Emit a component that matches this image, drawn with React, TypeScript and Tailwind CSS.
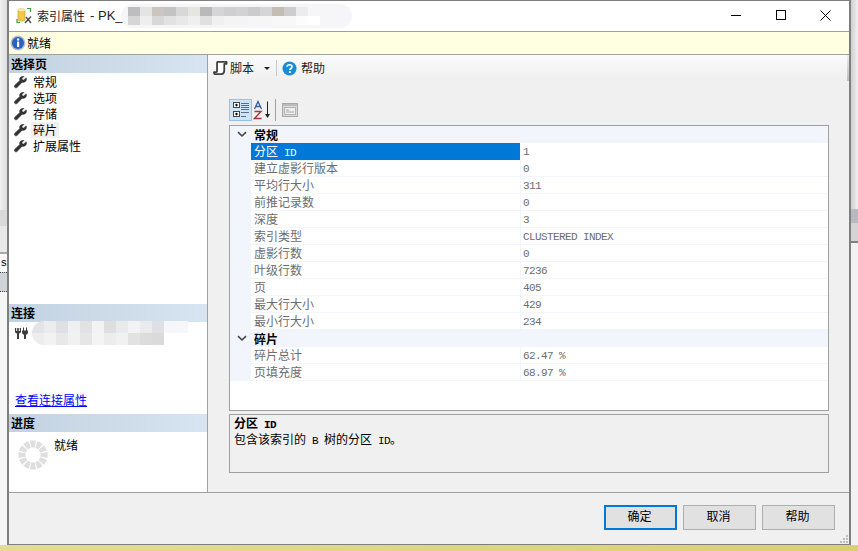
import React from 'react';

const cjk = "'Noto Sans CJK SC', 'Liberation Sans', sans-serif";

const pages = ['常规', '选项', '存储', '碎片', '扩展属性'];

const generalRows = [
  ['建立虚影行版本', '0'],
  ['平均行大小', '311'],
  ['前推记录数', '0'],
  ['深度', '3'],
  ['索引类型', 'CLUSTERED INDEX'],
  ['虚影行数', '0'],
  ['叶级行数', '7236'],
  ['页', '405'],
  ['最大行大小', '429'],
  ['最小行大小', '234'],
];

const fragmentRows = [
  ['碎片总计', '62.47 %'],
  ['页填充度', '68.97 %'],
];

const titleBlur = [
  ['#bdbdbd', '#e4e4e4', '#c9c6bf', '#c3c3c3', '#d8d8d8', '#e6e5e0', '#b9b9b9', '#d5d5d5', '#cfcfcf', '#d2d2d2', '#cbcbcb', '#d5d5d5', '#c4bdb3', '#cdcdcd', '#ececec', '#f6f6f6'],
  ['#d6d6d6', '#eeeeee', '#d8d8d8', '#e2e2e2', '#e8e8e8', '#efefef', '#e0e0e0', '#f0f0f0', '#f4f4f4', '#f4f4f4', '#f6f6f6', '#f6f6f6', '#f8f8f8', '#f8f8f8', '#fcfcfc', '#ffffff'],
];

const connBlur = [
  ['#e3e4e7', '#ececee', '#dfe0e3', '#f0f0f2', '#e2e2e4', '#f3f3f4', '#dedede', '#e9eaec', '#f3f3f5', '#ebebee', '#dfe0e3', '#f5f7fb', '#f5f7fb'],
  ['#ededed', '#f2f2f2', '#e8e8e8', '#f1f1f1', '#e6e6e6', '#f4f4f4', '#ececec', '#f1f1f1', '#e2e2e2', '#dcdcdc', '#dadada', '#ffffff', '#ffffff'],
];

function Wrench() {
  return (
    <svg viewBox="0 0 14 14" className="w-[13px] h-[13px] shrink-0">
      <path d="M13 1.8 10.4 4.2 8.9 3.8 8.6 2.4 11 .5C9-.3 6.4.8 6 3c-.1.7 0 1.300.2 1.800L1 9.700c-.9.9-.9 2 0 2.700.8.700 1.800.6 2.600-.2l5-5.300c2.400.7 5-1 5-3.300 0-.6-.2-1.200-.6-1.800Z" fill="#333333" stroke="#333333" strokeWidth="0.4" />
    </svg>
  );
}

function TitleIcon() {
  return (
    <svg viewBox="0 0 18 18" className="w-[18px] h-[18px] shrink-0">
      <path d="M2 3c0-1.500 7-1.500 7 0v10c0 1.500-7 1.500-7 0Z" fill="#f2c84b" stroke="#b8942c" strokeWidth="0.6" />
      <ellipse cx="5.500" cy="3" rx="3.500" ry="1.200" fill="#fbe9a6" />
      <path d="M11 1.500h3.500V5M14.500 10" fill="none" stroke="#3f9a3f" strokeWidth="1.200" />
      <path d="M1 12v3.500h3" fill="none" stroke="#3f9a3f" strokeWidth="1.200" />
      <path d="M9 16 15 9.500M10 10l5 6" stroke="#444444" strokeWidth="1.300" />
    </svg>
  );
}

function InfoIcon() {
  return (
    <svg viewBox="0 0 16 16" className="w-4 h-4 shrink-0">
      <circle cx="8" cy="8" r="7.500" fill="#b9bec6" />
      <circle cx="8" cy="8" r="6" fill="#2a5fc4" />
      <rect x="7" y="6.500" width="2.200" height="5.500" fill="#ffffff" />
      <rect x="7" y="3.500" width="2.200" height="2" fill="#ffffff" />
    </svg>
  );
}

function ScriptIcon() {
  return (
    <svg viewBox="0 0 16 16" className="w-[15px] h-4 shrink-0">
      <path d="M5 1.500h9.500v2H12V11c0 2-1 3.500-3 3.500H2.500c-1 0-1.500-.7-1.500-2h2.500c.500 0 .800-.3.800-1V3.500C4.300 2.200 4.500 1.500 5 1.500Z" fill="#ffffff" stroke="#404040" strokeWidth="1.900" strokeLinejoin="round" />
    </svg>
  );
}

function HelpIcon() {
  return (
    <svg viewBox="0 0 16 16" className="w-[15px] h-[15px] shrink-0">
      <circle cx="8" cy="8" r="7.500" fill="#1c8bd6" />
      <path d="M5.400 6.200C5.500 4.800 6.600 4 8 4c1.500 0 2.700.900 2.700 2.200 0 1.800-2.300 1.800-2.300 3.500" fill="none" stroke="#ffffff" strokeWidth="1.700" />
      <rect x="7.400" y="10.800" width="2" height="2" fill="#ffffff" />
    </svg>
  );
}

function CategorizedIcon() {
  return (
    <svg viewBox="0 0 20 20" className="w-5 h-5">
      <rect x="2.500" y="2.500" width="6" height="5" fill="#ffffff" stroke="#444444" />
      <rect x="2.500" y="11.500" width="6" height="5" fill="#ffffff" stroke="#444444" />
      <path d="M4 5h3M5.500 3.800v2.500M4 14h3M5.500 12.800v2.500" stroke="#000000" />
      <path d="M10 3.500h8M10 5.500h8M10 7.500h8M10 9.500h8M10 12.500h8M10 16.500h5" stroke="#5f6f80" />
    </svg>
  );
}

function SortIcon() {
  return (
    <svg viewBox="0 0 20 20" className="w-5 h-5">
      <path d="M1.500 9 5 1.500 8.500 9M3 6.500h4" fill="none" stroke="#2f5f9f" strokeWidth="1.300" />
      <path d="M1.500 11.500h6.500L1.500 18.500H8.500" fill="none" stroke="#a03a3a" strokeWidth="1.400" />
      <path d="M14.500 1.500v14" stroke="#222222" />
      <path d="M12 14h5l-2.500 4Z" fill="#222222" />
    </svg>
  );
}

function PagesIcon() {
  return (
    <svg viewBox="0 0 16 16" className="w-4 h-4">
      <rect x=".500" y="1.500" width="15" height="13" fill="#dcdcdc" stroke="#a8a8a8" />
      <rect x="1" y="2" width="14" height="2" fill="#bdbdbd" />
      <rect x="2.500" y="5.500" width="11" height="7" fill="#efefef" stroke="#b4b4b4" />
      <path d="M4 8h3M4 10h8" stroke="#a8a8a8" />
    </svg>
  );
}

function PlugIcon() {
  return (
    <svg viewBox="0 0 15 15" className="w-[15px] h-[15px] shrink-0">
      <path d="M1 2v3.500c0 1 .800 1.800 2 2V13h2V7.500c1.200-.2 2-1 2-2V2H5.800v3H4.800V2H3.200v3H2.200V2Z" fill="#3c3c3c" />
      <path d="M8 4.500h6v2c0 1.200-.9 2-2 2.200V13h-2V8.700c-1.100-.2-2-1-2-2.200ZM9 1.500h1v3H9ZM12 1.500h1v3h-1Z" fill="#3c3c3c" />
    </svg>
  );
}

function Spinner() {
  const segs = Array.from({ length: 12 }, (_, i) => i * 30);
  return (
    <svg viewBox="0 0 30 30" className="w-[30px] h-[30px] shrink-0">
      {segs.map((deg) => (
        <path key={deg} d="M12 .5h6l-1.300 7h-3.400Z" fill="#dedede" transform={`rotate(${deg} 15 15)`} />
      ))}
    </svg>
  );
}

function Chevron() {
  return (
    <svg viewBox="0 0 10 7" className="w-[10px] h-[7px]">
      <path d="M1 1.200 5 5l4-3.800" fill="none" stroke="#444444" strokeWidth="1.600" />
    </svg>
  );
}

function Mono({ children, bold }: { children: React.ReactNode; bold?: boolean }) {
  return (
    <span className={`font-['Liberation_Mono',monospace] text-[11px] tracking-[-0.6px] ${bold ? 'font-bold' : ''}`}>{children}</span>
  );
}

function SectionHeader({ label }: { label: string }) {
  return (
    <div className="h-[18px] shrink-0 pl-[2px] bg-gradient-to-r from-[#c3d2e1] to-[#d7e4f1] text-xs font-bold leading-[18px] text-black">
      {label}
    </div>
  );
}

function Category({ label }: { label: string }) {
  return (
    <div className="flex h-[17px] items-center bg-[#f2f6fc]">
      <div className="flex w-[21px] justify-center pl-[2px]">
        <Chevron />
      </div>
      <span className="-mt-px text-xs font-bold leading-[17px] pl-[3px] text-black">{label}</span>
    </div>
  );
}

function Row({ name, value }: { name: string; value: string }) {
  return (
    <div className="flex h-[17px] bg-[#f2f6fc]">
      <div className="w-[21px] shrink-0" />
      <div className="flex flex-1 border-b border-[#f2f6fc] bg-white">
        <div className="w-[269px] pl-[3px] text-xs leading-[16px] text-[#6d6d6d]">{name}</div>
        <div className="flex-1 border-l border-[#f2f6fc] pl-[2px] text-[11px] leading-[14px] text-[#6d6d6d]">
          <Mono>{value}</Mono>
        </div>
      </div>
    </div>
  );
}

function Blur({ rows, cell }: { rows: string[][]; cell: string }) {
  return (
    <div className="flex flex-col">
      {rows.map((row, r) => (
        <div key={r} className="flex">
          {row.map((c, i) => (
            <div key={i} className={cell} style={{ backgroundColor: c }} />
          ))}
        </div>
      ))}
    </div>
  );
}

function DialogButton({ label, primary }: { label: string; primary?: boolean }) {
  return (
    <button
      className={`w-[73px] h-[25px] bg-[#e1e1e1] pb-[3px] pr-[2px] text-xs leading-[16px] text-black ${primary ? 'border-2 border-[#0078d7]' : 'border border-[#adadad]'}`}
    >
      {label}
    </button>
  );
}

function Grip() {
  return (
    <div className="grid grid-cols-3 gap-px">
      {[0, 0, 1, 0, 1, 1, 1, 1, 1].map((on, i) => (
        <div key={i} className={`h-[2px] w-[2px] ${on ? 'bg-[#bdbdbd]' : ''}`} />
      ))}
    </div>
  );
}

export default function App() {
  return (
    <div className="h-[551px] w-[858px] overflow-hidden bg-gradient-to-b from-[#f4f4f4] to-[#ececec]" style={{ fontFamily: cjk }}>
      <div className="flex h-[545px]">
        {/* what shows of the window behind, left side */}
        <div className="w-[7px] flex flex-col shrink-0 overflow-hidden bg-gradient-to-r from-[#f2f2f2] to-[#dcdcdc]">
          <div className="h-[210px] shrink-0" />
          <div className="h-[16px] shrink-0 bg-[#d9d9d9]" />
          <div className="h-[26px] shrink-0 bg-[#e8e8e8]" />
          <div className="h-[2px] shrink-0 bg-[#a8a8a8]" />
          <div className="h-[18px] shrink-0 bg-[#fbfbfb] text-right font-['Liberation_Mono',monospace] text-[11px] leading-[18px] text-black">s</div>
          <div className="h-[20px] shrink-0 border-y border-dotted border-[#444444] bg-[#d0d4da]" />
          <div className="flex-1 bg-[#f6f6f6]" />
        </div>

        {/* dialog */}
        <div className="flex w-[844px] shrink-0 flex-col border-x-2 border-y border-[#7f7f7f] bg-[#f0f0f0]">
          <div className="flex h-[30px] shrink-0 items-center bg-white">
            <div className="ml-[7px]">
              <TitleIcon />
            </div>
            <span className="ml-[3px] text-xs text-[#222222]">索引属性</span>
            <span className="ml-[5px] font-['Liberation_Sans',sans-serif] text-[13px] text-[#222222]">- PK_</span>
            <div className="ml-[-2px] flex h-[24px] items-center rounded-full bg-[#f6f6f8] pl-[7px] pr-[32px]">
              <Blur rows={titleBlur} cell="h-[9px] w-[12px]" />
            </div>
            <div className="mb-[2px] ml-auto flex items-center pr-px">
              <div className="flex w-[45px] justify-center">
                <div className="h-px w-[10px] bg-black" />
              </div>
              <div className="flex w-[45px] justify-center">
                <div className="h-[10px] w-[10px] border border-black" />
              </div>
              <div className="flex w-[45px] justify-center">
                <svg viewBox="0 0 11 11" className="h-[11px] w-[11px]">
                  <path d="M.5.5 10.500 10.500M10.500.5.500 10.500" stroke="#000000" />
                </svg>
              </div>
            </div>
          </div>

          <div className="flex h-[24px] shrink-0 items-center border-y border-[#a0a0a0] bg-[#ffffe1] pl-[1px]">
            <InfoIcon />
            <span className="ml-[1px] text-xs text-black">就绪</span>
          </div>

          <div className="flex min-h-0 flex-1 border-b border-[#a0a0a0]">
            {/* left panel */}
            <div className="flex w-[199px] shrink-0 flex-col border-r border-[#a0a0a0] bg-white">
              <SectionHeader label="选择页" />
              <div className="pl-[5px] pt-px">
                {pages.map((page) => (
                  <div key={page} className="flex h-[16px] items-center gap-[4px]">
                    <Wrench />
                    <span className={`px-[2px] text-xs leading-[16px] text-black ${page === '碎片' ? 'bg-[#f0f0f0]' : ''}`}>{page}</span>
                  </div>
                ))}
              </div>
              <div className="h-[150px] shrink-0" />
              <SectionHeader label="连接" />
              <div className="flex h-[70px] shrink-0 items-start pl-[5px]">
                <div className="mt-[4px]">
                  <PlugIcon />
                </div>
                <div className="-mt-px ml-[3px] overflow-hidden rounded-l-full rounded-tr-[14px]">
                  <Blur rows={connBlur} cell="h-[12px] w-[12px]" />
                </div>
              </div>
              <a className="ml-[6px] h-[22px] shrink-0 text-xs leading-[16px] text-[#0000ff] underline">查看连接属性</a>
              <SectionHeader label="进度" />
              <div className="flex gap-[6px] pl-[9px] pt-[5px]">
                <div className="mt-[3px]">
                  <Spinner />
                </div>
                <span className="text-xs leading-[16px] text-black">就绪</span>
              </div>
            </div>

            {/* right panel */}
            <div className="flex flex-1 flex-col">
              <div className="flex h-[26px] shrink-0 items-center bg-gradient-to-b from-[#fbfbfb] to-[#efefef] pl-[5px]">
                <ScriptIcon />
                <span className="ml-[2px] text-xs text-[#222222]">脚本</span>
                <div className="ml-[10px] h-0 w-0 border-x-[3px] border-t-[3px] border-x-transparent border-t-[#222222]" />
                <div className="ml-[6px] h-[16px] w-px bg-[#c8c8c8]" />
                <div className="ml-[5px]">
                  <HelpIcon />
                </div>
                <span className="ml-[4px] text-xs text-[#222222]">帮助</span>
                <div className="ml-auto h-full w-[2px] bg-gradient-to-b from-[#ececec] to-[#bdbdbd]" />
              </div>

              <div className="flex flex-1 flex-col pl-[21px] pr-[20px] pt-[18px]">
                <div className="flex h-[26px] shrink-0 items-start">
                  <div className="flex h-[22px] w-[23px] items-center justify-center border border-[#92c3ec] bg-[#cde4f7]">
                    <CategorizedIcon />
                  </div>
                  <div className="ml-[1px] flex h-[22px] items-center">
                    <SortIcon />
                  </div>
                  <div className="ml-[2px] h-[22px] w-px bg-[#a0a0a0]" />
                  <div className="ml-[6px] flex h-[22px] items-center">
                    <PagesIcon />
                  </div>
                </div>
                <div className="h-[286px] shrink-0 border border-[#a0a0a0] bg-white">
                  <Category label="常规" />
                  <div className="flex h-[17px] bg-[#f2f6fc]">
                    <div className="w-[21px] shrink-0" />
                    <div className="flex flex-1 bg-white">
                      <div className="w-[269px] bg-[#0078d7] pl-[3px] text-xs leading-[16px] text-white">
                        分区<Mono> ID</Mono>
                      </div>
                      <div className="pl-[3px] text-[11px] leading-[14px] text-[#6d6d6d]">
                        <Mono>1</Mono>
                      </div>
                    </div>
                  </div>
                  {generalRows.map(([name, value]) => (
                    <Row key={name} name={name} value={value} />
                  ))}
                  <Category label="碎片" />
                  {fragmentRows.map(([name, value]) => (
                    <Row key={name} name={name} value={value} />
                  ))}
                </div>
                <div className="mt-[3px] h-[59px] shrink-0 border border-[#a0a0a0] bg-[#f0f0f0] pl-[4px] text-xs text-black">
                  <div className="h-[16px] font-bold leading-[16px]">
                    分区<Mono bold> ID</Mono>
                  </div>
                  <div className="h-[16px] leading-[16px]">
                    包含该索引的<Mono> B </Mono>树的分区<Mono> ID</Mono>。
                  </div>
                </div>
              </div>
            </div>
          </div>

          <div className="relative flex h-[51px] shrink-0 items-start justify-end gap-[6px] pr-[14px] pt-[12px]">
            <DialogButton label="确定" primary />
            <DialogButton label="取消" />
            <DialogButton label="帮助" />
            <div className="absolute bottom-[1px] right-[1px]">
              <Grip />
            </div>
          </div>
        </div>

        {/* what shows of the window behind, right side */}
        <div className="flex w-[7px] shrink-0 flex-col bg-gradient-to-r from-[#d0d0d0] to-[#f0f0f0]">
          <div className="h-[209px]" />
          <div className="h-[14px] bg-[#b8bac0]" />
          <div className="h-[18px] bg-[#d4d4d4]" />
          <div className="h-[2px] bg-[#808080]" />
          <div className="flex-1 bg-[#f2f2f2]" />
        </div>
      </div>
      <div className="h-[6px] bg-gradient-to-r from-[#e4dc96] to-[#d9d072]" />
    </div>
  );
}
